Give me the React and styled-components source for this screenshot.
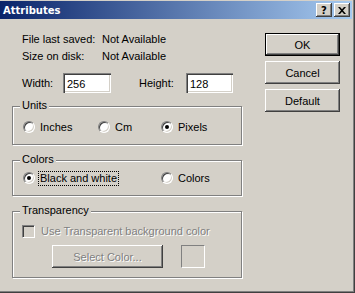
import styled, { createGlobalStyle, css } from "styled-components";

const GlobalStyle = createGlobalStyle`
  html, body {
    margin: 0;
    padding: 0;
    background: #d4d0c8;
  }
  body {
    font-family: "Liberation Sans", Arial, sans-serif;
    font-size: 11px;
    color: #000;
  }
`;

const raised = css`
  box-shadow: inset -1px -1px 0 #404040, inset 1px 1px 0 #fff,
    inset -2px -2px 0 #808080, inset 2px 2px 0 #d4d0c8;
`;

const sunken = css`
  border: 1px solid;
  border-color: #808080 #fff #fff #808080;
  box-shadow: inset 1px 1px 0 #404040, inset -1px -1px 0 #d4d0c8;
`;

export default function App() {
  return (
    <>
      <GlobalStyle />
      <Window>
        <Frame>
          <TitleBar>
            <Title>Attributes</Title>
            <TitleButton>?</TitleButton>
            <TitleButton $close>
              <svg width="8" height="7" viewBox="0 0 8 7">
                <path d="M0 0h2l2 2.2L6 0h2L5 3.5 8 7H6L4 4.8 2 7H0l3-3.5z" fill="#000" />
              </svg>
            </TitleButton>
          </TitleBar>
          <Body>
            <LeftColumn>
              <Info>
                <InfoRow><InfoLabel>File last saved:</InfoLabel>Not Available</InfoRow>
                <InfoRow><InfoLabel>Size on disk:</InfoLabel>Not Available</InfoRow>
              </Info>
              <SizeRow>
                <SizeLabel $w={41}>Width:</SizeLabel>
                <TextInput defaultValue="256" />
                <SizeLabel $w={47} $gap={28}>Height:</SizeLabel>
                <TextInput defaultValue="128" $w={47} />
              </SizeRow>

              <Group $h={39} $top={13} $pad={13}>
                <Legend>Units</Legend>
                <OptionRow $cols="75px 63px auto">
                  <Option><Radio /><span>Inches</span></Option>
                  <Option><Radio /><span>Cm</span></Option>
                  <Option><Radio $checked /><span>Pixels</span></Option>
                </OptionRow>
              </Group>

              <Group $h={36} $top={15} $pad={10}>
                <Legend>Colors</Legend>
                <OptionRow $cols="138px auto">
                  <Option><Radio $checked /><Focus>Black and white</Focus></Option>
                  <Option><Radio /><span>Colors</span></Option>
                </OptionRow>
              </Group>

              <Group $h={67} $top={15} $pad={12} $left={9}>
                <Legend>Transparency</Legend>
                <Option>
                  <CheckBox />
                  <Disabled>Use Transparent background color</Disabled>
                </Option>
                <ColorRow>
                  <PushButton $w={111} disabled>
                    <Disabled>Select Color...</Disabled>
                  </PushButton>
                  <Swatch />
                </ColorRow>
              </Group>
            </LeftColumn>

            <RightColumn>
              <PushButton $default>OK</PushButton>
              <PushButton>Cancel</PushButton>
              <PushButton>Default</PushButton>
            </RightColumn>
          </Body>
        </Frame>
      </Window>
    </>
  );
}

const Window = styled.div`
  width: 355px;
  height: 293px;
  box-sizing: border-box;
  background: #d4d0c8;
  border-right: 1px solid #404040;
  border-bottom: 1px solid #404040;
  display: flex;
`;

const Frame = styled.div`
  flex: 1;
  display: flex;
  flex-direction: column;
  border-right: 1px solid #808080;
  border-bottom: 1px solid #808080;
  padding: 1px 1px 0 0;
`;

const TitleBar = styled.div`
  height: 18px;
  display: flex;
  align-items: center;
  padding: 0 2px 0 3px;
  background: linear-gradient(to right, #0a246a, #a6caf0);
`;

const Title = styled.div`
  flex: 1;
  font-family: "DejaVu Sans", Verdana, sans-serif;
  font-weight: bold;
  font-size: 10px;
  color: #fff;
`;

const TitleButton = styled.div`
  width: 16px;
  height: 14px;
  box-sizing: border-box;
  margin-left: ${(p) => (p.$close ? "2px" : "0")};
  display: flex;
  align-items: center;
  justify-content: center;
  background: #d4d0c8;
  font-family: "DejaVu Sans", Verdana, sans-serif;
  font-weight: bold;
  font-size: 10px;
  color: #000;
  ${raised};
`;

const Body = styled.div`
  flex: 1;
  display: flex;
  align-items: flex-start;
  padding: 12px 0 0 12px;
`;

const LeftColumn = styled.div`
  width: 230px;
  display: flex;
  flex-direction: column;
`;

const RightColumn = styled.div`
  margin-left: 23px;
  padding-top: 2px;
  display: flex;
  flex-direction: column;
  gap: 5px;
`;

const Info = styled.div`
  padding-left: 10px;
`;

const InfoRow = styled.div`
  height: 17px;
  line-height: 17px;
  display: flex;
`;

const InfoLabel = styled.span`
  width: 80px;
`;

const SizeRow = styled.div`
  margin-top: 8px;
  padding-left: 10px;
  height: 20px;
  display: flex;
  align-items: center;
`;

const SizeLabel = styled.span`
  width: ${(p) => p.$w}px;
  margin-left: ${(p) => p.$gap || 0}px;
`;

const TextInput = styled.input`
  width: ${(p) => p.$w || 48}px;
  height: 20px;
  box-sizing: border-box;
  border: none;
  outline: none;
  padding: 1px 0 0 4px;
  background: #fff;
  font-family: "Liberation Sans", Arial, sans-serif;
  font-size: 11px;
  box-shadow: inset 1px 1px 0 #808080, inset 2px 2px 0 #404040,
    inset -1px -1px 0 #fff, inset -2px -2px 0 #d4d0c8;
`;

const Group = styled.div`
  position: relative;
  height: ${(p) => p.$h}px;
  box-sizing: border-box;
  margin-top: ${(p) => p.$top}px;
  padding: ${(p) => p.$pad}px 0 0 ${(p) => p.$left || 10}px;
  border: 1px solid #808080;
  box-shadow: inset 1px 1px 0 #fff, 1px 1px 0 #fff;
`;

const Legend = styled.span`
  position: absolute;
  top: -9px;
  left: 7px;
  padding: 0 2px;
  line-height: 14px;
  background: #d4d0c8;
`;

const OptionRow = styled.div`
  display: grid;
  grid-template-columns: ${(p) => p.$cols};
`;

const Option = styled.div`
  height: 14px;
  display: flex;
  align-items: center;
  gap: 5px;
`;

const Radio = styled.span`
  position: relative;
  width: 12px;
  height: 12px;
  box-sizing: border-box;
  border-radius: 50%;
  background: #fff;
  ${sunken};

  ${(p) =>
    p.$checked &&
    css`
      &::after {
        content: "";
        position: absolute;
        left: 3px;
        top: 3px;
        width: 4px;
        height: 4px;
        border-radius: 50%;
        background: #000;
      }
    `}
`;

const Focus = styled.span`
  margin-left: -1px;
  padding: 0 1px;
  line-height: 13px;
  outline: 1px dotted #000;
`;

const CheckBox = styled.span`
  width: 13px;
  height: 13px;
  margin-right: 1px;
  box-sizing: border-box;
  background: #d4d0c8;
  ${sunken};
`;

const Disabled = styled.span`
  color: #808080;
  text-shadow: 1px 1px 0 #fff;
`;

const ColorRow = styled.div`
  margin-top: 7px;
  padding-left: 30px;
  display: flex;
  gap: 18px;
`;

const PushButton = styled.button`
  width: ${(p) => p.$w || 75}px;
  height: 23px;
  padding: 0;
  box-sizing: border-box;
  border: ${(p) => (p.$default ? "1px solid #000" : "none")};
  background: #d4d0c8;
  font-family: "Liberation Sans", Arial, sans-serif;
  font-size: 11px;
  color: #000;
  ${raised};
`;

const Swatch = styled.div`
  width: 24px;
  height: 23px;
  box-sizing: border-box;
  border: 1px solid;
  border-color: #808080 #fff #fff #808080;
`;
